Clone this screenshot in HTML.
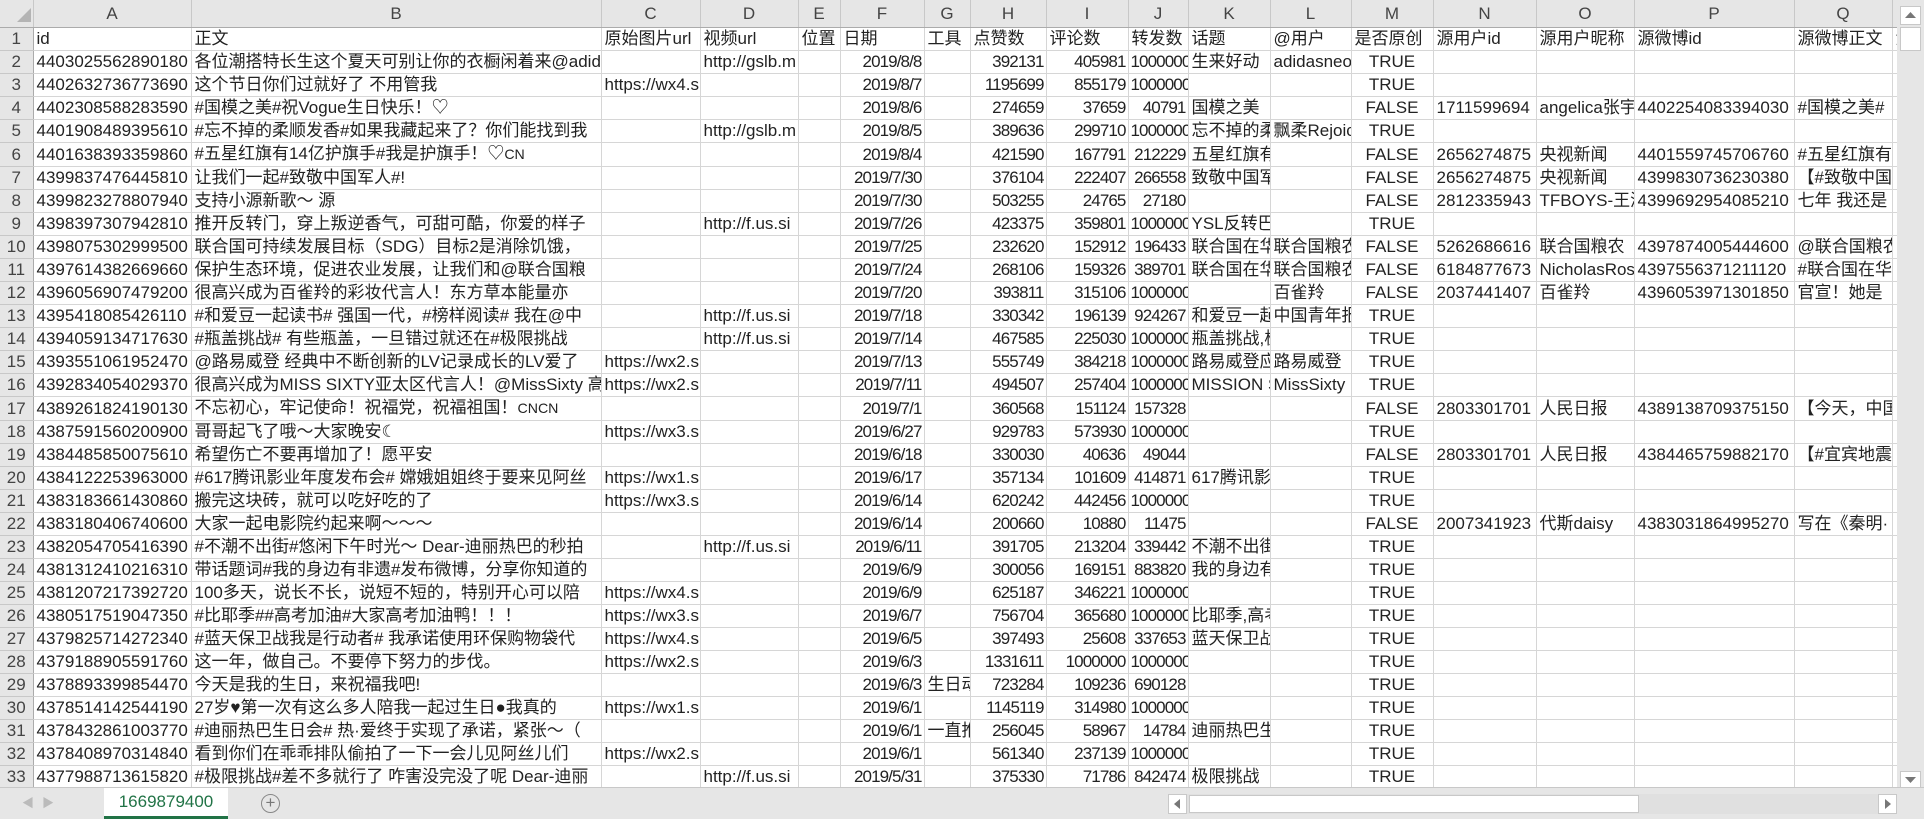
<!DOCTYPE html>
<html><head><meta charset="utf-8"><style>
*{margin:0;padding:0;box-sizing:border-box}
body{width:1924px;height:819px;overflow:hidden;background:#fff;font-family:"Liberation Sans","Noto Sans CJK SC",sans-serif;font-size:17px;color:#222;position:relative}
table{position:absolute;left:0;top:0;border-collapse:collapse;table-layout:fixed;width:1897px}
td,th{height:23px;border-right:1px solid #d6d6d6;border-bottom:1px solid #d6d6d6;white-space:nowrap;overflow:hidden;padding:0 3px;line-height:21px;font-weight:normal}
thead th{height:27px;background:#e6e6e6;color:#444;text-align:center;border-color:#c8c8c8;border-bottom:1px solid #ababab}
tbody th{background:#e6e6e6;color:#444;text-align:center;border-color:#c8c8c8;border-right:1px solid #ababab;padding:0}
.r{text-align:right;letter-spacing:-0.9px;padding:0 2px}.c{text-align:center}
#vs{position:absolute;left:1897px;top:0;width:27px;height:789px;background:#e6e6e6}
#tabs{position:absolute;left:0;top:787px;width:1924px;height:32px;background:#e6e6e6;border-top:1px solid #c8c8c8}
</style></head><body>
<table>
<colgroup><col style="width:33px"><col style="width:158px"><col style="width:410px"><col style="width:99px"><col style="width:98px"><col style="width:42px"><col style="width:84px"><col style="width:46px"><col style="width:76px"><col style="width:82px"><col style="width:60px"><col style="width:82px"><col style="width:81px"><col style="width:82px"><col style="width:103px"><col style="width:98px"><col style="width:160px"><col style="width:98px"><col style="width:5px"></colgroup>
<thead><tr><th><svg width="14" height="14" style="position:relative;left:8px;top:3px"><polygon points="14,0 14,14 0,14" fill="#b4b4b4"/></svg></th><th>A</th><th>B</th><th>C</th><th>D</th><th>E</th><th>F</th><th>G</th><th>H</th><th>I</th><th>J</th><th>K</th><th>L</th><th>M</th><th>N</th><th>O</th><th>P</th><th>Q</th><th></th></tr></thead>
<tbody>
<tr><th>1</th><td>id</td><td>正文</td><td>原始图片url</td><td>视频url</td><td>位置</td><td>日期</td><td>工具</td><td>点赞数</td><td>评论数</td><td>转发数</td><td>话题</td><td>@用户</td><td>是否原创</td><td>源用户id</td><td>源用户昵称</td><td>源微博id</td><td>源微博正文</td><td>源</td></tr>
<tr><th>2</th><td>4403025562890180</td><td>各位潮搭特长生这个夏天可别让你的衣橱闲着来@adidas</td><td></td><td>http://gslb.m</td><td></td><td class="r">2019/8/8</td><td></td><td class="r">392131</td><td class="r">405981</td><td class="r">1000000</td><td>生来好动</td><td>adidasneo</td><td class="c">TRUE</td><td></td><td></td><td></td><td></td><td></td></tr>
<tr><th>3</th><td>4402632736773690</td><td>这个节日你们过就好了 不用管我</td><td>https://wx4.s</td><td></td><td></td><td class="r">2019/8/7</td><td></td><td class="r">1195699</td><td class="r">855179</td><td class="r">1000000</td><td></td><td></td><td class="c">TRUE</td><td></td><td></td><td></td><td></td><td></td></tr>
<tr><th>4</th><td>4402308588283590</td><td>#国模之美#祝Vogue生日快乐！♡</td><td></td><td></td><td></td><td class="r">2019/8/6</td><td></td><td class="r">274659</td><td class="r">37659</td><td class="r">40791</td><td>国模之美</td><td></td><td class="c">FALSE</td><td>1711599694</td><td>angelica张宇</td><td>4402254083394030</td><td>#国模之美#</td><td></td></tr>
<tr><th>5</th><td>4401908489395610</td><td>#忘不掉的柔顺发香#如果我藏起来了？你们能找到我</td><td></td><td>http://gslb.m</td><td></td><td class="r">2019/8/5</td><td></td><td class="r">389636</td><td class="r">299710</td><td class="r">1000000</td><td>忘不掉的柔</td><td>飘柔Rejoice</td><td class="c">TRUE</td><td></td><td></td><td></td><td></td><td></td></tr>
<tr><th>6</th><td>4401638393359860</td><td>#五星红旗有14亿护旗手#我是护旗手！♡<small>CN</small></td><td></td><td></td><td></td><td class="r">2019/8/4</td><td></td><td class="r">421590</td><td class="r">167791</td><td class="r">212229</td><td>五星红旗有</td><td></td><td class="c">FALSE</td><td>2656274875</td><td>央视新闻</td><td>4401559745706760</td><td>#五星红旗有</td><td></td></tr>
<tr><th>7</th><td>4399837476445810</td><td>让我们一起#致敬中国军人#!</td><td></td><td></td><td></td><td class="r">2019/7/30</td><td></td><td class="r">376104</td><td class="r">222407</td><td class="r">266558</td><td>致敬中国军</td><td></td><td class="c">FALSE</td><td>2656274875</td><td>央视新闻</td><td>4399830736230380</td><td>【#致敬中国</td><td></td></tr>
<tr><th>8</th><td>4399823278807940</td><td>支持小源新歌～ 源</td><td></td><td></td><td></td><td class="r">2019/7/30</td><td></td><td class="r">503255</td><td class="r">24765</td><td class="r">27180</td><td></td><td></td><td class="c">FALSE</td><td>2812335943</td><td>TFBOYS-王源</td><td>4399692954085210</td><td>七年 我还是</td><td></td></tr>
<tr><th>9</th><td>4398397307942810</td><td>推开反转门，穿上叛逆香气，可甜可酷，你爱的样子</td><td></td><td>http://f.us.si</td><td></td><td class="r">2019/7/26</td><td></td><td class="r">423375</td><td class="r">359801</td><td class="r">1000000</td><td>YSL反转巴</td><td></td><td class="c">TRUE</td><td></td><td></td><td></td><td></td><td></td></tr>
<tr><th>10</th><td>4398075302999500</td><td>联合国可持续发展目标（SDG）目标2是消除饥饿，</td><td></td><td></td><td></td><td class="r">2019/7/25</td><td></td><td class="r">232620</td><td class="r">152912</td><td class="r">196433</td><td>联合国在华</td><td>联合国粮农</td><td class="c">FALSE</td><td>5262686616</td><td>联合国粮农</td><td>4397874005444600</td><td>@联合国粮农</td><td></td></tr>
<tr><th>11</th><td>4397614382669660</td><td>保护生态环境，促进农业发展，让我们和@联合国粮</td><td></td><td></td><td></td><td class="r">2019/7/24</td><td></td><td class="r">268106</td><td class="r">159326</td><td class="r">389701</td><td>联合国在华</td><td>联合国粮农</td><td class="c">FALSE</td><td>6184877673</td><td>NicholasRos</td><td>4397556371211120</td><td>#联合国在华</td><td></td></tr>
<tr><th>12</th><td>4396056907479200</td><td>很高兴成为百雀羚的彩妆代言人！东方草本能量亦</td><td></td><td></td><td></td><td class="r">2019/7/20</td><td></td><td class="r">393811</td><td class="r">315106</td><td class="r">1000000</td><td></td><td>百雀羚</td><td class="c">FALSE</td><td>2037441407</td><td>百雀羚</td><td>4396053971301850</td><td>官宣！她是</td><td></td></tr>
<tr><th>13</th><td>4395418085426110</td><td>#和爱豆一起读书# 强国一代，#榜样阅读# 我在@中</td><td></td><td>http://f.us.si</td><td></td><td class="r">2019/7/18</td><td></td><td class="r">330342</td><td class="r">196139</td><td class="r">924267</td><td>和爱豆一起</td><td>中国青年报</td><td class="c">TRUE</td><td></td><td></td><td></td><td></td><td></td></tr>
<tr><th>14</th><td>4394059134717630</td><td>#瓶盖挑战# 有些瓶盖，一旦错过就还在#极限挑战</td><td></td><td>http://f.us.si</td><td></td><td class="r">2019/7/14</td><td></td><td class="r">467585</td><td class="r">225030</td><td class="r">1000000</td><td>瓶盖挑战,极</td><td></td><td class="c">TRUE</td><td></td><td></td><td></td><td></td><td></td></tr>
<tr><th>15</th><td>4393551061952470</td><td>@路易威登 经典中不断创新的LV记录成长的LV爱了</td><td>https://wx2.s</td><td></td><td></td><td class="r">2019/7/13</td><td></td><td class="r">555749</td><td class="r">384218</td><td class="r">1000000</td><td>路易威登应</td><td>路易威登</td><td class="c">TRUE</td><td></td><td></td><td></td><td></td><td></td></tr>
<tr><th>16</th><td>4392834054029370</td><td>很高兴成为MISS SIXTY亚太区代言人！@MissSixty 高</td><td>https://wx2.s</td><td></td><td></td><td class="r">2019/7/11</td><td></td><td class="r">494507</td><td class="r">257404</td><td class="r">1000000</td><td>MISSION S</td><td>MissSixty</td><td class="c">TRUE</td><td></td><td></td><td></td><td></td><td></td></tr>
<tr><th>17</th><td>4389261824190130</td><td>不忘初心，牢记使命！祝福党，祝福祖国！<small>CNCN</small></td><td></td><td></td><td></td><td class="r">2019/7/1</td><td></td><td class="r">360568</td><td class="r">151124</td><td class="r">157328</td><td></td><td></td><td class="c">FALSE</td><td>2803301701</td><td>人民日报</td><td>4389138709375150</td><td>【今天，中国</td><td></td></tr>
<tr><th>18</th><td>4387591560200900</td><td>哥哥起飞了哦～大家晚安☾</td><td>https://wx3.s</td><td></td><td></td><td class="r">2019/6/27</td><td></td><td class="r">929783</td><td class="r">573930</td><td class="r">1000000</td><td></td><td></td><td class="c">TRUE</td><td></td><td></td><td></td><td></td><td></td></tr>
<tr><th>19</th><td>4384485850075610</td><td>希望伤亡不要再增加了！愿平安</td><td></td><td></td><td></td><td class="r">2019/6/18</td><td></td><td class="r">330030</td><td class="r">40636</td><td class="r">49044</td><td></td><td></td><td class="c">FALSE</td><td>2803301701</td><td>人民日报</td><td>4384465759882170</td><td>【#宜宾地震</td><td></td></tr>
<tr><th>20</th><td>4384122253963000</td><td>#617腾讯影业年度发布会# 嫦娥姐姐终于要来见阿丝</td><td>https://wx1.s</td><td></td><td></td><td class="r">2019/6/17</td><td></td><td class="r">357134</td><td class="r">101609</td><td class="r">414871</td><td>617腾讯影</td><td></td><td class="c">TRUE</td><td></td><td></td><td></td><td></td><td></td></tr>
<tr><th>21</th><td>4383183661430860</td><td>搬完这块砖，就可以吃好吃的了</td><td>https://wx3.s</td><td></td><td></td><td class="r">2019/6/14</td><td></td><td class="r">620242</td><td class="r">442456</td><td class="r">1000000</td><td></td><td></td><td class="c">TRUE</td><td></td><td></td><td></td><td></td><td></td></tr>
<tr><th>22</th><td>4383180406740600</td><td>大家一起电影院约起来啊～～～</td><td></td><td></td><td></td><td class="r">2019/6/14</td><td></td><td class="r">200660</td><td class="r">10880</td><td class="r">11475</td><td></td><td></td><td class="c">FALSE</td><td>2007341923</td><td>代斯daisy</td><td>4383031864995270</td><td>写在《秦明·</td><td></td></tr>
<tr><th>23</th><td>4382054705416390</td><td>#不潮不出街#悠闲下午时光～ Dear-迪丽热巴的秒拍</td><td></td><td>http://f.us.si</td><td></td><td class="r">2019/6/11</td><td></td><td class="r">391705</td><td class="r">213204</td><td class="r">339442</td><td>不潮不出街</td><td></td><td class="c">TRUE</td><td></td><td></td><td></td><td></td><td></td></tr>
<tr><th>24</th><td>4381312410216310</td><td>带话题词#我的身边有非遗#发布微博，分享你知道的</td><td></td><td></td><td></td><td class="r">2019/6/9</td><td></td><td class="r">300056</td><td class="r">169151</td><td class="r">883820</td><td>我的身边有</td><td></td><td class="c">TRUE</td><td></td><td></td><td></td><td></td><td></td></tr>
<tr><th>25</th><td>4381207217392720</td><td>100多天，说长不长，说短不短的，特别开心可以陪</td><td>https://wx4.s</td><td></td><td></td><td class="r">2019/6/9</td><td></td><td class="r">625187</td><td class="r">346221</td><td class="r">1000000</td><td></td><td></td><td class="c">TRUE</td><td></td><td></td><td></td><td></td><td></td></tr>
<tr><th>26</th><td>4380517519047350</td><td>#比耶季##高考加油#大家高考加油鸭！！！</td><td>https://wx3.s</td><td></td><td></td><td class="r">2019/6/7</td><td></td><td class="r">756704</td><td class="r">365680</td><td class="r">1000000</td><td>比耶季,高考</td><td></td><td class="c">TRUE</td><td></td><td></td><td></td><td></td><td></td></tr>
<tr><th>27</th><td>4379825714272340</td><td>#蓝天保卫战我是行动者# 我承诺使用环保购物袋代</td><td>https://wx4.s</td><td></td><td></td><td class="r">2019/6/5</td><td></td><td class="r">397493</td><td class="r">25608</td><td class="r">337653</td><td>蓝天保卫战</td><td></td><td class="c">TRUE</td><td></td><td></td><td></td><td></td><td></td></tr>
<tr><th>28</th><td>4379188905591760</td><td>这一年，做自己。不要停下努力的步伐。</td><td>https://wx2.s</td><td></td><td></td><td class="r">2019/6/3</td><td></td><td class="r">1331611</td><td class="r">1000000</td><td class="r">1000000</td><td></td><td></td><td class="c">TRUE</td><td></td><td></td><td></td><td></td><td></td></tr>
<tr><th>29</th><td>4378893399854470</td><td>今天是我的生日，来祝福我吧!</td><td></td><td></td><td></td><td class="r">2019/6/3</td><td>生日动</td><td class="r">723284</td><td class="r">109236</td><td class="r">690128</td><td></td><td></td><td class="c">TRUE</td><td></td><td></td><td></td><td></td><td></td></tr>
<tr><th>30</th><td>4378514142544190</td><td>27岁♥第一次有这么多人陪我一起过生日●我真的</td><td>https://wx1.s</td><td></td><td></td><td class="r">2019/6/1</td><td></td><td class="r">1145119</td><td class="r">314980</td><td class="r">1000000</td><td></td><td></td><td class="c">TRUE</td><td></td><td></td><td></td><td></td><td></td></tr>
<tr><th>31</th><td>4378432861003770</td><td>#迪丽热巴生日会# 热·爱终于实现了承诺，紧张～（</td><td></td><td></td><td></td><td class="r">2019/6/1</td><td>一直推</td><td class="r">256045</td><td class="r">58967</td><td class="r">14784</td><td>迪丽热巴生</td><td></td><td class="c">TRUE</td><td></td><td></td><td></td><td></td><td></td></tr>
<tr><th>32</th><td>4378408970314840</td><td>看到你们在乖乖排队偷拍了一下一会儿见阿丝儿们</td><td>https://wx2.s</td><td></td><td></td><td class="r">2019/6/1</td><td></td><td class="r">561340</td><td class="r">237139</td><td class="r">1000000</td><td></td><td></td><td class="c">TRUE</td><td></td><td></td><td></td><td></td><td></td></tr>
<tr><th>33</th><td>4377988713615820</td><td>#极限挑战#差不多就行了 咋害没完没了呢 Dear-迪丽</td><td></td><td>http://f.us.si</td><td></td><td class="r">2019/5/31</td><td></td><td class="r">375330</td><td class="r">71786</td><td class="r">842474</td><td>极限挑战</td><td></td><td class="c">TRUE</td><td></td><td></td><td></td><td></td><td></td></tr>
</tbody></table>
<div id="vs">
 <div style="position:absolute;left:3px;top:6px;width:21px;height:19px;background:#fff;border:1px solid #c8c8c8"><svg width="19" height="17"><polygon points="4,11 15,11 9.5,5" fill="#777"/></svg></div>
 <div style="position:absolute;left:3px;top:27px;width:21px;height:24px;background:#fff;border:1px solid #c8c8c8"></div>
 <div style="position:absolute;left:3px;top:771px;width:21px;height:18px;background:#fff;border:1px solid #c8c8c8"><svg width="19" height="16"><polygon points="4,5 15,5 9.5,11" fill="#777"/></svg></div>
</div>
<div id="tabs">
 <span style="position:absolute;left:22px;top:6px;color:#bbb;font-size:12px">◀</span>
 <span style="position:absolute;left:42px;top:6px;color:#bbb;font-size:12px">▶</span>
 <div style="position:absolute;left:104px;top:0;width:124px;height:31px;background:#fff;border-bottom:3px solid #217346;color:#217346;text-align:center;line-height:28px;font-size:17px">1669879400</div>
 <div style="position:absolute;left:261px;top:6px;width:19px;height:19px;border:1px solid #888;border-radius:50%;color:#777;text-align:center;line-height:16px;font-size:17px">+</div>
 <div style="position:absolute;left:1168px;top:6px;width:729px;height:20px;background:#e0e0e0">
  <div style="position:absolute;left:0;top:0;width:19px;height:20px;background:#fff;border:1px solid #c8c8c8"><svg width="17" height="18"><polygon points="11,4 11,14 5,9" fill="#777"/></svg></div>
  <div style="position:absolute;left:21px;top:1px;width:450px;height:18px;background:#fff;border:1px solid #c8c8c8"></div>
  <div style="position:absolute;right:0;top:0;width:19px;height:20px;background:#fff;border:1px solid #c8c8c8"><svg width="17" height="18"><polygon points="6,4 6,14 12,9" fill="#777"/></svg></div>
 </div>
</div>
</body></html>
